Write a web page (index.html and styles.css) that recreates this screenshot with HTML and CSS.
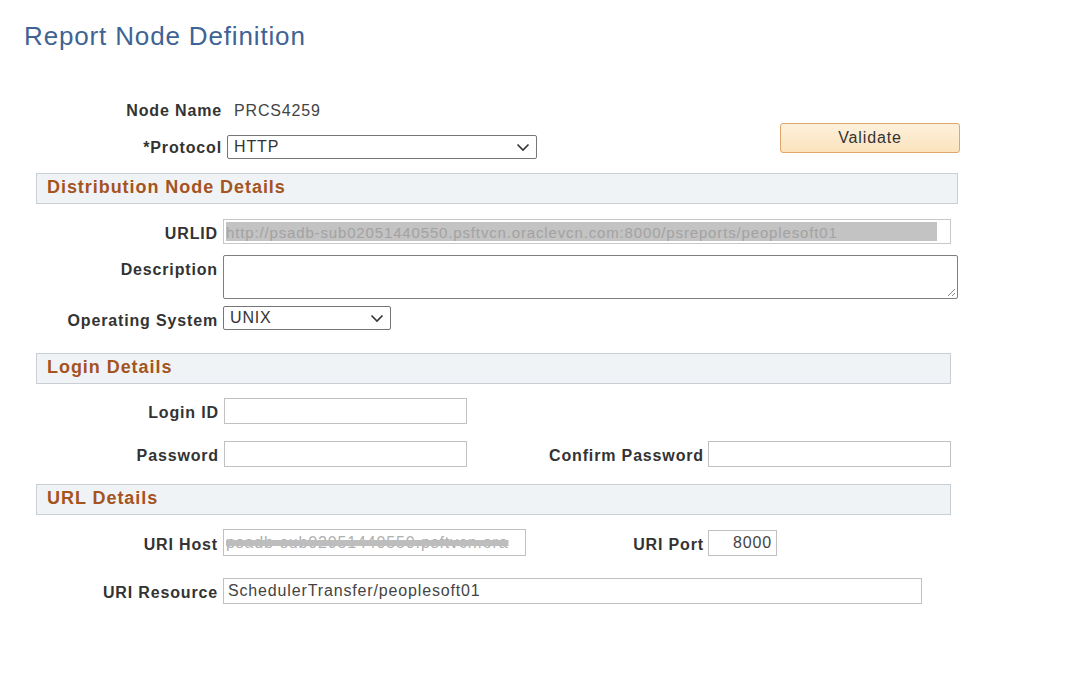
FILE: index.html
```html
<!DOCTYPE html>
<html>
<head>
<meta charset="utf-8">
<link rel="stylesheet" href="styles.css">
</head>
<body>
<div class="page">
  <h1 class="title">Report Node Definition</h1>

  <div class="top">
    <div class="top-fields">
      <div class="row row-node">
        <span class="lbl lbl-top">Node Name</span>
        <span class="val">PRCS4259</span>
      </div>
      <div class="row row-proto">
        <span class="lbl lbl-top lbl-tight">*Protocol</span>
        <div class="field select sel-proto">
          <span>HTTP</span>
          <svg class="chev" width="14" height="9" viewBox="0 0 14 9"><polyline points="1.5,1.5 7,7 12.5,1.5" fill="none" stroke="#333" stroke-width="1.6"/></svg>
        </div>
      </div>
    </div>
    <button class="btn">Validate</button>
  </div>

  <div class="group g-dist">
    <h2 class="ghead ghead-wide">Distribution Node Details</h2>
    <div class="row row-urlid">
      <span class="lbl lbl-218">URLID</span>
      <div class="field urlid"><span class="redact">http://psadb-sub02051440550.psftvcn.oraclevcn.com:8000/psreports/peoplesoft01</span></div>
    </div>
    <div class="row row-desc">
      <span class="lbl lbl-218 lbl-desc">Description</span>
      <div class="field desc">
        <svg class="grip" width="10" height="10" viewBox="0 0 10 10"><line x1="9" y1="2" x2="2" y2="9" stroke="#888" stroke-width="1"/><line x1="9" y1="6" x2="6" y2="9" stroke="#888" stroke-width="1"/></svg>
      </div>
    </div>
    <div class="row row-os">
      <span class="lbl lbl-218 lbl-os">Operating System</span>
      <div class="field select sel-os">
        <span>UNIX</span>
        <svg class="chev" width="14" height="9" viewBox="0 0 14 9"><polyline points="1.5,1.5 7,7 12.5,1.5" fill="none" stroke="#333" stroke-width="1.6"/></svg>
      </div>
    </div>
  </div>

  <div class="group g-login">
    <h2 class="ghead">Login Details</h2>
    <div class="row row-login">
      <span class="lbl lbl-219">Login ID</span>
      <div class="field text w243"></div>
    </div>
    <div class="row row-pass">
      <span class="lbl lbl-219">Password</span>
      <div class="field text w243"></div>
      <span class="lbl lbl-confirm">Confirm Password</span>
      <div class="field text w243"></div>
    </div>
  </div>

  <div class="group g-url">
    <h2 class="ghead">URL Details</h2>
    <div class="row row-host">
      <span class="lbl lbl-218">URI Host</span>
      <div class="field text host"><span class="strike">psadb-sub02051440550.psftvcn.ora</span></div>
      <span class="lbl lbl-port">URI Port</span>
      <div class="field text port">8000</div>
    </div>
    <div class="row row-res">
      <span class="lbl lbl-218">URI Resource</span>
      <div class="field text res">SchedulerTransfer/peoplesoft01</div>
    </div>
  </div>
</div>
</body>
</html>
```

FILE: styles.css
```css
html, body {
  margin: 0;
  padding: 0;
  background: #ffffff;
}

body {
  font-family: "Liberation Sans", Arial, sans-serif;
  font-size: 16px;
  letter-spacing: 0.85px;
  color: #333333;
}

.page {
  width: 1073px;
}

.title {
  margin: 0;
  padding: 20px 0 0 24px;
  font-size: 26px;
  line-height: 32px;
  font-weight: normal;
  color: #3e6394;
}

.top {
  display: flex;
  width: 960px;
  margin-top: 46px;
}

.top-fields {
  display: flex;
  flex-direction: column;
}

.row {
  display: flex;
  align-items: center;
}

.lbl {
  font-weight: bold;
  text-align: right;
  color: #333333;
  flex: none;
  white-space: nowrap;
  padding-top: 4px;
}

.lbl-top { width: 222px; padding-top: 2px; }
.lbl-218 { width: 218px; padding-right: 5px; }
.lbl-219 { width: 219px; padding-right: 5px; }
.lbl-confirm { width: 237px; padding-right: 4px; }
.lbl-port { width: 178px; padding-right: 4px; }

.row-node { height: 24px; }
.row-node .val { margin-left: 12px; color: #444; padding-top: 2px; }

.row-proto { height: 24px; margin-top: 13px; }
.lbl-tight { padding-right: 5px; }

.field {
  box-sizing: border-box;
  background: #fff;
  flex: none;
}

.select {
  display: flex;
  align-items: center;
  justify-content: space-between;
  border: 1px solid #767676;
  border-radius: 2px;
  height: 24px;
  padding: 0 6px 0 6px;
  color: #333;
}

.sel-proto { width: 310px; }
.sel-os { width: 168px; }
.chev { flex: none; }

.btn {
  margin: 25px 0 0 auto;
  width: 180px;
  height: 30px;
  box-sizing: border-box;
  border: 1px solid #dfa66b;
  border-radius: 3px;
  background: linear-gradient(#fdf1dc, #fbe3bd);
  font-family: inherit;
  font-size: 16px;
  letter-spacing: 0.85px;
  color: #333;
  padding: 0;
}

.group {
  display: flex;
  flex-direction: column;
}

.ghead {
  margin: 0 0 0 36px;
  box-sizing: border-box;
  width: 915px;
  height: 31px;
  border: 1px solid #c9cfd4;
  background: #f0f3f5;
  padding-left: 10px;
  font-size: 18px;
  line-height: 26px;
  font-weight: bold;
  letter-spacing: 0.95px;
  color: #a3541f;
}

.ghead-wide { width: 922px; }

.g-dist { margin-top: 14px; }
.g-login { margin-top: 23px; }
.g-url { margin-top: 17px; }

.row-urlid { margin-top: 15px; }
.urlid {
  width: 728px;
  height: 25px;
  border: 1px solid #c8c8c8;
  padding: 2px 13px 2px 2px;
  overflow: hidden;
}
.redact {
  display: block;
  height: 19px;
  line-height: 21px;
  background: #c3c3c3;
  color: #a2a2a2;
  white-space: nowrap;
  overflow: hidden;
  font-size: 15px;
}

.row-desc { margin-top: 11px; align-items: flex-start; }
.lbl-desc { line-height: 26px; padding-top: 2px; }
.desc {
  position: relative;
  width: 735px;
  height: 44px;
  border: 1px solid #7f7f7f;
  border-radius: 2px;
}
.grip {
  position: absolute;
  right: 1px;
  bottom: 1px;
}

.row-os { margin-top: 7px; }
.lbl-os { padding-top: 6px; }

.row-login { margin-top: 14px; }
.row-pass { margin-top: 17px; }

.text {
  height: 26px;
  border: 1px solid #c1c1c1;
  padding: 0 4px;
  line-height: 24px;
  color: #444;
  white-space: nowrap;
  overflow: hidden;
}
.w243 { width: 243px; }

.row-host { margin-top: 14px; }
.host { width: 303px; height: 27px; padding: 0 2px; line-height: 26px; }
.strike {
  color: #b0b0b0;
  text-decoration: line-through;
  text-decoration-color: #bdbdbd;
  text-decoration-thickness: 6px;
}
.port { width: 69px; text-align: right; height: 26px; padding-right: 4px; }

.row-res { margin-top: 22px; }
.res { width: 699px; padding-left: 4px; }
```
